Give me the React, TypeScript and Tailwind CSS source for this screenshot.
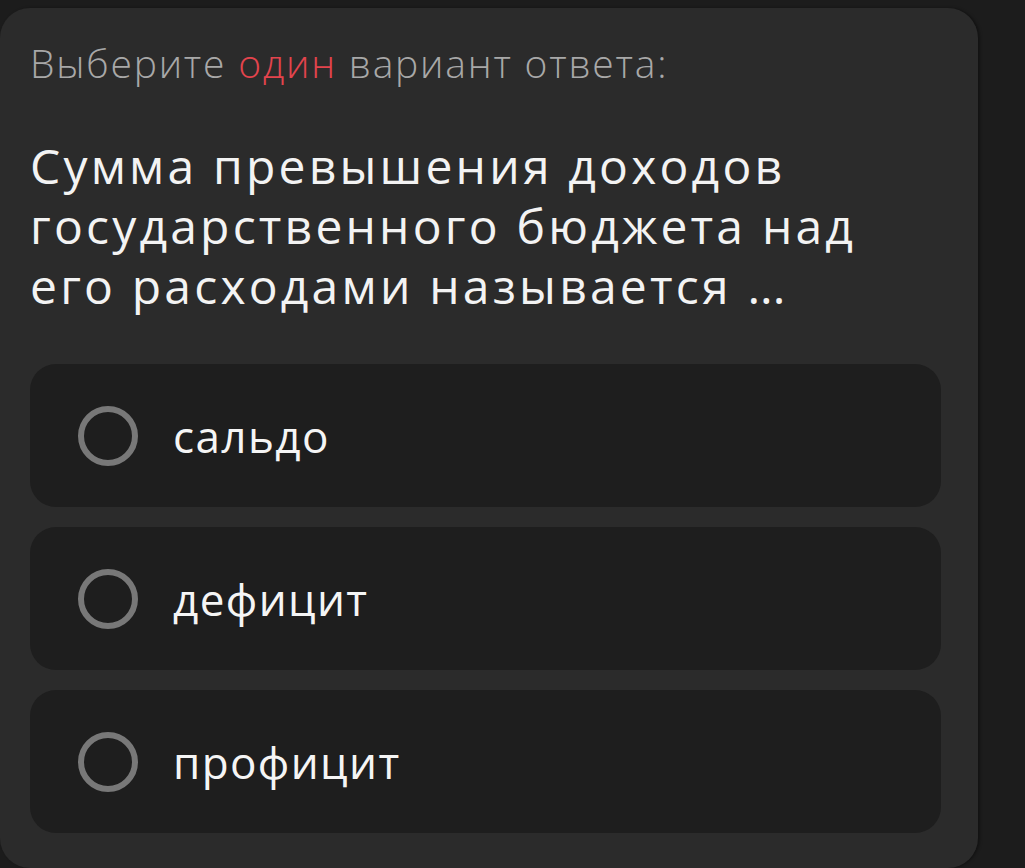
const options = ["сальдо", "дефицит", "профицит"];

export default function App() {
  return (
    <div
      className="min-h-[868px] w-full overflow-hidden bg-[#1c1c1c] pt-2"
      style={{ fontFamily: '"Open Sans", "Noto Sans", sans-serif' }}
    >
      <div className="w-[978px] rounded-[30px] bg-[#2b2b2b] pb-[35px] pl-[30px] pr-[37px] pt-[33px] shadow-[2px_0_3px_rgba(0,0,0,0.35)]">
        <p className="text-[39px] font-light leading-[44px] tracking-[1.8px] text-[#a8a8a8]">
          Выберите <span className="text-[#e3444d]">один</span> вариант ответа:
        </p>

        <h1 className="mt-[51px] text-[48px] font-medium leading-[60px] tracking-[3.2px] text-[#f3f3f3]">
          <span className="block">Сумма превышения доходов</span>
          <span className="block">государственного бюджета над</span>
          <span className="block">
            его расходами называется <span className="tracking-normal">...</span>
          </span>
        </h1>

        <div className="mt-[48px] flex flex-col gap-5">
          {options.map((opt) => (
            <div
              key={opt}
              className="flex h-[143px] items-center gap-[35px] rounded-[26px] bg-[#1e1e1e] pl-[48px]"
            >
              <span className="h-[60px] w-[60px] shrink-0 rounded-full border-[6px] border-[#787878]" />
              <span className="text-[44px] leading-none tracking-[1.4px] text-[#f5f5f5]">
                {opt}
              </span>
            </div>
          ))}
        </div>
      </div>
    </div>
  );
}
